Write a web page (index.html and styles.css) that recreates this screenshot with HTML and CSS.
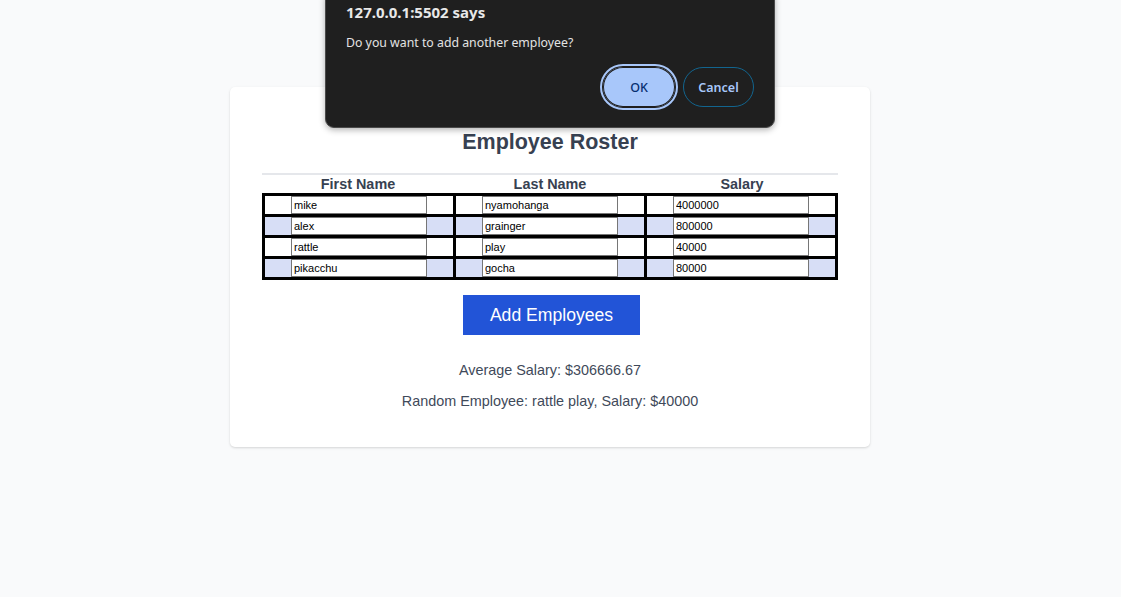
FILE: index.html
```html
<!DOCTYPE html>
<html lang="en">
<head>
<meta charset="utf-8">
<title>Employee Roster</title>
<link rel="stylesheet" href="styles.css">
</head>
<body>
<div class="page">
  <div class="card">
    <h2 class="title">Employee Roster</h2>
    <div class="roster">
      <div class="roster-head">
        <div>First Name</div>
        <div>Last Name</div>
        <div>Salary</div>
      </div>
      <div class="roster-body">
        <div class="row">
          <div class="cell"><input class="field" type="text" value="mike"></div>
          <div class="cell"><input class="field" type="text" value="nyamohanga"></div>
          <div class="cell"><input class="field" type="text" value="4000000"></div>
        </div>
        <div class="row alt">
          <div class="cell"><input class="field" type="text" value="alex"></div>
          <div class="cell"><input class="field" type="text" value="grainger"></div>
          <div class="cell"><input class="field" type="text" value="800000"></div>
        </div>
        <div class="row">
          <div class="cell"><input class="field" type="text" value="rattle"></div>
          <div class="cell"><input class="field" type="text" value="play"></div>
          <div class="cell"><input class="field" type="text" value="40000"></div>
        </div>
        <div class="row alt">
          <div class="cell"><input class="field" type="text" value="pikacchu"></div>
          <div class="cell"><input class="field" type="text" value="gocha"></div>
          <div class="cell"><input class="field" type="text" value="80000"></div>
        </div>
      </div>
    </div>
    <button class="add-btn" type="button">Add Employees</button>
    <p class="stat">Average Salary: $306666.67</p>
    <p class="stat">Random Employee: rattle play, Salary: $40000</p>
  </div>
</div>

<div class="dialog" role="dialog">
  <div class="dialog-title">127.0.0.1:5502 says</div>
  <div class="dialog-msg">Do you want to add another employee?</div>
  <div class="dialog-actions">
    <button class="dlg-btn ok" type="button">OK</button>
    <button class="dlg-btn cancel" type="button">Cancel</button>
  </div>
</div>
</body>
</html>
```

FILE: styles.css
```css
html, body {
  margin: 0;
  padding: 0;
}
body {
  background: #f9fafb;
  font-family: "Liberation Sans", Arial, sans-serif;
  color: #374151;
  height: 597px;
  overflow: hidden;
}
.page {
  width: 1100px;
  padding-top: 87px;
}
.card {
  width: 640px;
  box-sizing: border-box;
  margin: 0 0 0 230px;
  background: #ffffff;
  border-radius: 5px;
  box-shadow: 0 1px 3px rgba(0, 0, 0, 0.1), 0 1px 2px rgba(0, 0, 0, 0.06);
  padding: 32px 32px 37px;
  text-align: center;
}
.title {
  margin: 11px 0 18px;
  font-size: 21.5px;
  line-height: 25px;
  font-weight: bold;
  color: #374151;
}
.roster-head {
  display: grid;
  grid-template-columns: 1fr 1fr 1fr;
  border-top: 2px solid #e5e7eb;
  font-size: 14.4px;
  font-weight: bold;
  line-height: 18px;
  height: 18px;
  color: #374151;
}
.roster-body {
  display: flex;
  flex-direction: column;
  gap: 3px;
  padding: 3px;
  background: #000;
}
.row {
  display: grid;
  grid-template-columns: 1fr 1fr 1fr;
  gap: 3px;
}
.cell {
  height: 18px;
  display: flex;
  justify-content: center;
  align-items: center;
  background: #ffffff;
}
.row.alt .cell {
  background: #d7def6;
}
.field {
  width: 136px;
  height: 18px;
  box-sizing: border-box;
  margin: 0;
  border: 1px solid #767676;
  padding: 0 2px;
  font-family: "Liberation Sans", Arial, sans-serif;
  font-size: 11px;
  color: #000;
  background: #fff;
  border-radius: 0;
}
.add-btn {
  display: block;
  margin: 15px 0 27px 201px;
  width: 177px;
  height: 40px;
  border: none;
  border-radius: 0;
  background: #2254d7;
  color: #ffffff;
  font-family: "Liberation Sans", Arial, sans-serif;
  font-size: 17.6px;
  padding: 0;
}
.stat {
  margin: 14px 0 0;
  font-size: 14.4px;
  line-height: 17px;
  color: #3f4a5a;
}
.add-btn + .stat {
  margin-top: 0;
}

/* alert dialog overlay */
.dialog {
  position: absolute;
  left: 325px;
  top: -10px;
  width: 450px;
  box-sizing: border-box;
  padding: 11px 20px 20px 20px;
  background: #1f1f1f;
  border: 1px solid #4a4a4a;
  border-radius: 9px;
  box-shadow: 0 2px 6px rgba(0, 0, 0, 0.3);
  font-family: "Noto Sans", "Open Sans", sans-serif;
  color: #e3e3e3;
}
.dialog-title {
  font-size: 15px;
  line-height: 21px;
  font-weight: bold;
  color: #e8e8e8;
}
.dialog-msg {
  margin-top: 11px;
  font-size: 12.3px;
  line-height: 18px;
  color: #e3e3e3;
}
.dialog-actions {
  margin-top: 15px;
  display: flex;
  justify-content: flex-end;
  gap: 8px;
}
.dlg-btn {
  height: 40px;
  border-radius: 20px;
  font-family: "Noto Sans", "Open Sans", sans-serif;
  font-size: 12.5px;
  font-weight: 600;
  padding: 0;
  margin: 0;
}
.dlg-btn.ok {
  width: 72px;
  background: #a8c7fa;
  color: #062e6f;
  font-weight: 500;
  border: none;
  box-shadow: inset 0 0 0 1px #1f1f1f;
  outline: 2px solid #a8c7fa;
  outline-offset: 1px;
}
.dlg-btn.cancel {
  width: 71px;
  background: transparent;
  color: #a8c7fa;
  border: 1px solid #12658f;
}
```
